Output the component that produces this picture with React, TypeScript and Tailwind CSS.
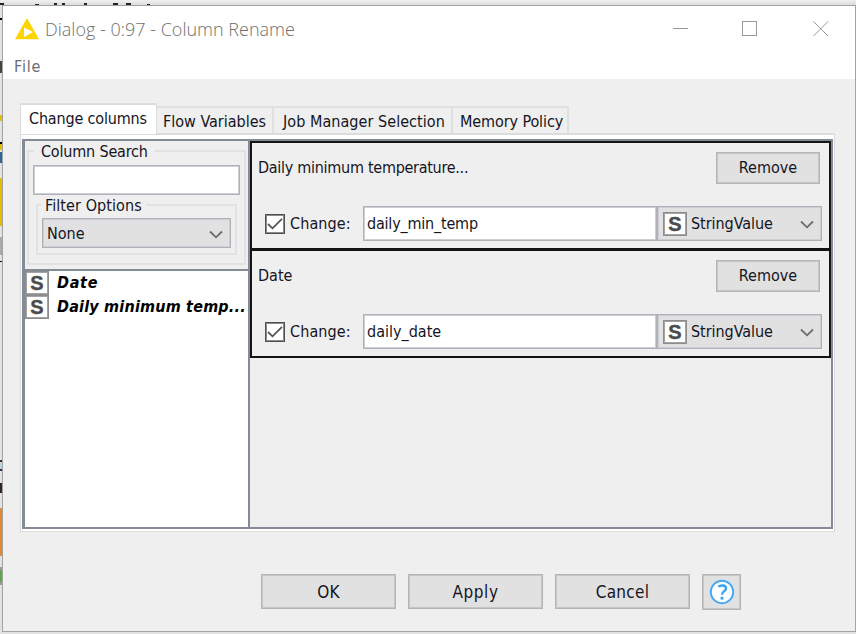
import React from "react";

const ui = "font-['DejaVu_Sans_Condensed','DejaVu_Sans',sans-serif] [font-stretch:condensed] text-[16px] leading-5 whitespace-nowrap text-[#15151f]";
const field = "border border-[#b1b2b9] shadow-[inset_0_0_0_1px_#cdced3]";
const button = "border border-[#b5b5b5] bg-[#e1e1e1] shadow-[inset_0_0_0_1px_#c6c6c6]";

function TypeIcon() {
  return (
    <span className="flex h-6 w-6 shrink-0 items-center justify-center border border-[#8c8c8c] bg-white font-['Liberation_Sans',sans-serif] text-[20px] leading-none font-bold tracking-normal text-[#4c4c4c] not-italic shadow-[inset_0_0_0_1px_#a4a4a4] [-webkit-text-stroke:0.4px_#4c4c4c]">
      S
    </span>
  );
}

function Chevron() {
  return (
    <svg className="mt-px shrink-0" width="14" height="9" viewBox="0 0 14 9" fill="none">
      <path d="M1 1.5 L7 7.3 L13 1.5" stroke="#6c6c6c" strokeWidth="1.8" />
    </svg>
  );
}

function Tab({ label, className }: { label: string; className: string }) {
  return (
    <div className={"flex h-[27px] shrink-0 items-center border-t-2 border-r-2 border-[#e0e0e0] pt-[2px] " + className}>
      {label}
    </div>
  );
}

function RenamePanel({
  name,
  value,
  className,
  nameClass,
  valueClass,
}: {
  name: string;
  value: string;
  className: string;
  nameClass: string;
  valueClass: string;
}) {
  return (
    <section className={"flex flex-col border-r-2 border-l-2 border-[#141414] " + className}>
      <div className="flex h-8 items-center justify-between pr-[9px] pl-[6px]">
        <span className={nameClass}>{name}</span>
        <button className={"h-8 w-[104px] pb-px " + button}>Remove</button>
      </div>
      <div className="mt-[22px] flex h-[35px] items-center pl-[13px]">
        <span className="flex h-5 w-5 items-center justify-center border border-[#505050] bg-white shadow-[inset_0_0_0_1px_#8a8a8a]">
          <svg width="16" height="14" viewBox="0 0 16 14" fill="none">
            <path d="M1 7 L5.5 11.3 L15 1.8" stroke="#555" strokeWidth="1.8" />
          </svg>
        </span>
        <span className="w-[78px] pl-[5px] tracking-[0.1px]">Change:</span>
        <div className={"flex h-[35px] w-[294px] items-center bg-white pl-[3px] " + field}>
          <span className={valueClass}>{value}</span>
        </div>
        <div className={"flex h-[35px] w-[165px] items-center bg-[#e1e1e1] pr-[7px] pl-[5px] " + field}>
          <TypeIcon />
          <span className="flex-1 pl-[4px] tracking-[-0.05px]">StringValue</span>
          <Chevron />
        </div>
      </div>
    </section>
  );
}

function Backdrop() {
  return (
    <>
      <div className="absolute top-0 left-0 h-[5px] w-[856px] bg-linear-to-b from-[#f0f0f0] to-[#dcdcdc]" />
      <div className="absolute top-[3px] left-0 h-[2px] w-1 bg-[#222]" />
      <div className="absolute top-[4px] left-[35px] h-px w-1 bg-[#222]" />
      <div className="absolute top-[3px] left-[54px] h-[2px] w-[3px] bg-[#222]" />
      <div className="absolute top-[3px] left-[62px] h-[2px] w-[3px] bg-[#222]" />
      <div className="absolute top-[3px] left-[84px] h-[2px] w-[3px] bg-[#222]" />
      <div className="absolute top-[3px] left-[113px] h-[2px] w-[5px] bg-[#222]" />
      <div className="absolute top-[3px] left-[126px] h-[2px] w-[5px] bg-[#222]" />
      <div className="absolute top-[4px] left-[147px] h-px w-[3px] bg-[#222]" />
      <div className="absolute top-[18px] left-0 h-[2px] w-[2px] bg-black" />
      <div className="absolute top-[61px] left-0 h-3 w-[2px] bg-[#444]" />
      <div className="absolute top-[115px] left-0 h-[6px] w-[2px] bg-[#e3bd00]" />
      <div className="absolute top-[142px] left-0 h-[2px] w-[2px] bg-black" />
      <div className="absolute top-[144px] left-0 h-[6px] w-[2px] bg-[#e3bd00]" />
      <div className="absolute top-[152px] left-0 h-[11px] w-[2px] bg-[#2d6699]" />
      <div className="absolute top-[178px] left-0 h-[48px] w-[2px] bg-[#e3bd00]" />
      <div className="absolute top-[237px] left-0 h-[18px] w-[2px] bg-[#aaa]" />
      <div className="absolute top-[261px] left-0 h-px w-[2px] bg-black" />
      <div className="absolute top-[460px] left-0 h-[11px] w-[2px] border-y-2 border-[#333] bg-[#b9d5df]" />
      <div className="absolute top-[483px] left-0 h-[10px] w-[2px] bg-[#31212c]" />
      <div className="absolute top-[508px] left-0 h-[48px] w-[2px] bg-[#e5872f]" />
      <div className="absolute top-[567px] left-0 h-[18px] w-[2px] border-y-3 border-[#999] bg-[#5fa551]" />
    </>
  );
}

export default function App() {
  return (
    <div className={"relative h-[634px] w-[856px] overflow-hidden bg-[#e2e2e2] pt-[5px] pl-[2px] " + ui}>
      <Backdrop />
      <main className="flex h-[627px] w-[854px] flex-col border border-[#a3a3a3] bg-[#efefef]">
        <header className="h-[73px] shrink-0 bg-white">
          <div className="flex h-12 items-center pr-[26px] pl-3">
            <svg className="-mt-[3px] shrink-0" width="24" height="22" viewBox="0 0 24 22">
              <path d="M12 0 L24 21.3 H0 Z" fill="#ffd500" />
              <path d="M9 9.5 L18 14 L9 19 Z" fill="#fff" />
            </svg>
            <h1 className="-mt-[2px] pl-[6px] font-['Open_Sans',sans-serif] text-[18px] leading-6 font-light text-[#707070] [font-stretch:normal]">
              Dialog - 0:97 - Column Rename
            </h1>
            <svg className="-mt-[2px] ml-auto shrink-0" width="156" height="16" viewBox="0 0 156 16" fill="none" stroke="#999" strokeWidth="1">
              <path d="M0 7.5 H15" />
              <rect x="69.5" y="0.5" width="14" height="14" />
              <path d="M140.5 0.5 L155 15 M155 0.5 L140.5 15" />
            </svg>
          </div>
          <nav className="pt-[3px] pl-[11px] tracking-[0.8px] text-[#6c6c72]">File</nav>
        </header>
        <div className="flex h-[453px] flex-col px-[17px] pt-[24px]">
          <div className="flex h-[30px] shrink-0 items-end">
            <div className="relative z-10 -mb-px flex h-[31px] w-[137px] items-center border-x border-t-2 border-[#dcdcdc] bg-white pb-[2px] pl-[8px] tracking-[-0.17px]">
              Change columns
            </div>
            <Tab label="Flow Variables" className="w-[117px] pl-[6px]" />
            <Tab label="Job Manager Selection" className="w-[179px] pl-[9px] tracking-[0.05px]" />
            <Tab label="Memory Policy" className="w-[116px] pl-[7px] tracking-[-0.1px]" />
          </div>
          <div className="h-[399px] w-[815px] shrink-0 border border-t-2 border-[#dcdcdc] bg-white px-px pt-[4px] pb-[3px]">
            <div className="flex h-[390px] w-[811px] border-2 border-l-3 border-[#858b96]">
              <aside className="flex w-[225px] shrink-0 flex-col border-r-2 border-[#858b96]">
                <div className="h-[130px] shrink-0 border-b-2 border-[#858b96] bg-[#efefef] px-[2px]">
                  <fieldset className="h-[124px] w-[219px] border-2 border-[#e2e2e2] px-[4px]">
                    <legend className="ml-[1px] h-5 px-[7px] leading-[22px] tracking-[-0.18px]">Column Search</legend>
                    <div className={"mt-[4px] h-[30px] w-[207px] bg-white " + field} />
                    <fieldset className="ml-[3px] h-[60px] w-[201px] border-2 border-[#e2e2e2] px-[4px]">
                      <legend className="ml-[-1px] h-5 px-1 leading-[22px] tracking-[0.08px]">Filter Options</legend>
                      <div className={"mt-[3px] flex h-[30px] w-[189px] items-center justify-between bg-[#e1e1e1] pt-px pr-[7px] pl-[4px] " + field}>
                        <span>None</span>
                        <Chevron />
                      </div>
                    </fieldset>
                  </fieldset>
                </div>
                <ul className="flex-1 bg-white font-bold text-black italic">
                  <li className="flex h-6 items-center">
                    <TypeIcon />
                    <span className="pl-2 tracking-[0.7px]">Date</span>
                  </li>
                  <li className="flex h-6 items-center">
                    <TypeIcon />
                    <span className="pl-2 tracking-[0.2px]">Daily minimum temp...</span>
                  </li>
                </ul>
              </aside>
              <div className="flex-1 bg-[#efefef]">
                <RenamePanel
                  name="Daily minimum temperature..."
                  value="daily_min_temp"
                  nameClass="tracking-[-0.28px]"
                  valueClass="tracking-[-0.2px]"
                  className="h-[109px] border-t-2 border-b-2 pt-[9px]"
                />
                <RenamePanel
                  name="Date"
                  value="daily_date"
                  nameClass=""
                  valueClass=""
                  className="h-[108px] border-t border-b-2 pt-[9px]"
                />
              </div>
            </div>
          </div>
        </div>
        <footer className="flex items-start gap-3 pt-[42px] pl-[258px] text-[17px]">
          <button className={"h-[35px] w-[135px] pt-px tracking-[0.2px] " + button}>OK</button>
          <button className={"h-[35px] w-[135px] pt-px tracking-[0.6px] " + button}>Apply</button>
          <button className={"h-[35px] w-[135px] pt-px tracking-[0.3px] " + button}>Cancel</button>
          <button className={"flex h-9 w-[39px] items-center justify-center " + button}>
            <svg width="26" height="26" viewBox="0 0 26 26" fill="none">
              <circle cx="13" cy="13" r="11.2" fill="#fff" stroke="#42aaf5" strokeWidth="1.9" />
              <path d="M9.3 7.7 C11 6.2 17 5.4 17 9.4 C17 12.3 13 12.1 13 15.8" stroke="#35a2f5" strokeWidth="2.4" />
              <rect x="11.6" y="17.8" width="2.8" height="2.8" fill="#35a2f5" />
            </svg>
          </button>
        </footer>
      </main>
    </div>
  );
}
